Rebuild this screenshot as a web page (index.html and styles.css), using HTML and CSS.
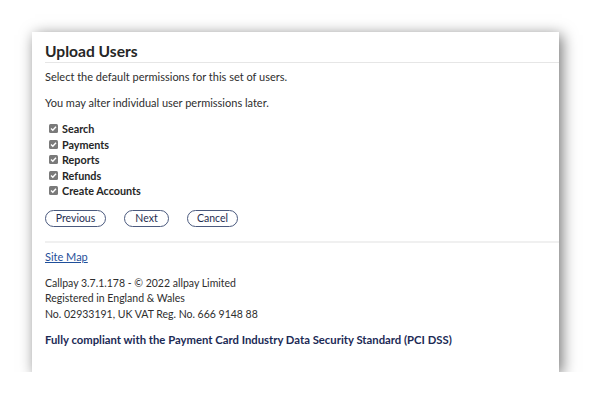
FILE: index.html
```html
<!DOCTYPE html>
<html lang="en">
<head>
<meta charset="utf-8">
<title>Upload Users</title>
<link rel="stylesheet" href="styles.css">
</head>
<body>
<div class="card">
  <h1 class="title">Upload Users</h1>
  <p class="text first">Select the default permissions for this set of users.</p>
  <p class="text">You may alter individual user permissions later.</p>
  <ul class="perms">
    <li><span class="box"><svg viewBox="0 0 9 9" width="9" height="9"><rect x="0" y="0" width="9" height="9" rx="1.5" fill="#7a7a7a"/><path d="M2 4.6 L3.8 6.3 L7 2.8" fill="none" stroke="#fff" stroke-width="1.4"/></svg></span>Search</li>
    <li><span class="box"><svg viewBox="0 0 9 9" width="9" height="9"><rect x="0" y="0" width="9" height="9" rx="1.5" fill="#7a7a7a"/><path d="M2 4.6 L3.8 6.3 L7 2.8" fill="none" stroke="#fff" stroke-width="1.4"/></svg></span>Payments</li>
    <li><span class="box"><svg viewBox="0 0 9 9" width="9" height="9"><rect x="0" y="0" width="9" height="9" rx="1.5" fill="#7a7a7a"/><path d="M2 4.6 L3.8 6.3 L7 2.8" fill="none" stroke="#fff" stroke-width="1.4"/></svg></span>Reports</li>
    <li><span class="box"><svg viewBox="0 0 9 9" width="9" height="9"><rect x="0" y="0" width="9" height="9" rx="1.5" fill="#7a7a7a"/><path d="M2 4.6 L3.8 6.3 L7 2.8" fill="none" stroke="#fff" stroke-width="1.4"/></svg></span>Refunds</li>
    <li><span class="box"><svg viewBox="0 0 9 9" width="9" height="9"><rect x="0" y="0" width="9" height="9" rx="1.5" fill="#7a7a7a"/><path d="M2 4.6 L3.8 6.3 L7 2.8" fill="none" stroke="#fff" stroke-width="1.4"/></svg></span>Create Accounts</li>
  </ul>
  <div class="buttons">
    <button class="btn btn-prev">Previous</button>
    <button class="btn btn-next">Next</button>
    <button class="btn btn-cancel">Cancel</button>
  </div>
  <div class="footer">
    <a class="sitemap" href="#">Site Map</a>
    <p class="legal">Callpay 3.7.1.178 - © 2022 allpay Limited<br>Registered in England &amp; Wales<br>No. 02933191, UK VAT Reg. No. 666 9148 88</p>
    <p class="pci">Fully compliant with the Payment Card Industry Data Security Standard (PCI DSS)</p>
  </div>
</div>
</body>
</html>
```

FILE: styles.css
```css
* { box-sizing: border-box; }
html, body { margin: 0; padding: 0; background: #fff; }
body {
  font-family: Lato, "Open Sans", "Liberation Sans", sans-serif;
  color: #2e2e2e;
  font-size: 11px;
}
.card {
  margin: 32px 0 0 32px;
  width: 527px;
  height: 340px;
  background: #fff;
  box-shadow: 3px 3px 14px rgba(0,0,0,0.55);
  padding: 9px 0 0 13px;
}
.title {
  margin: 0;
  font-size: 15.6px;
  line-height: 20px;
  font-weight: 700;
  color: #262626;
  padding-bottom: 1px;
  border-bottom: 1px solid #e6e6e6;
}
.text {
  margin: 10px 0 0;
  line-height: 16px;
}
.text.first { margin-top: 6px; }
.perms {
  list-style: none;
  margin: 10px 0 0;
  padding: 0 0 0 4px;
  font-weight: 700;
  font-size: 10.8px;
  color: #262626;
}
.perms li {
  display: flex;
  align-items: center;
  height: 15.5px;
}
.box {
  display: inline-flex;
  width: 9px;
  height: 9px;
  margin-right: 4px;
}
.box svg { display: block; }
.buttons {
  display: flex;
  gap: 18px;
  margin-top: 11px;
}
.btn {
  font-family: inherit;
  font-size: 10.5px;
  color: #1f2d50;
  background: #fff;
  border: 1px solid #4b5a7e;
  border-radius: 9px;
  height: 17px;
  padding: 0;
  line-height: 15px;
}
.btn-prev { width: 61px; }
.btn-next { width: 45px; }
.btn-cancel { width: 51px; }
.footer {
  margin-top: 14px;
  border-top: 2px solid #f0f0f0;
  padding-top: 6px;
}
.sitemap {
  display: block;
  line-height: 16px;
  color: #1f4f9a;
  text-decoration: underline;
  width: max-content;
}
.legal {
  margin: 11px 0 0;
  line-height: 15.5px;
  font-size: 10.5px;
}
.pci {
  margin: 10px 0 0;
  line-height: 16px;
  font-size: 11.3px;
  font-weight: 700;
  color: #1b2a55;
}
```
